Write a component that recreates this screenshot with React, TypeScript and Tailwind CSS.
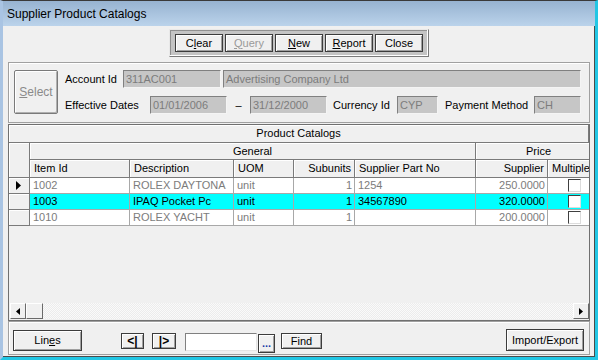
import React from 'react';

const btn =
  'flex items-center justify-center bg-[#f0f0f0] border border-[#3c3c3c] shadow-[inset_1px_1px_0_#fff,inset_-1px_-1px_0_#a0a0a0] text-[11px] leading-none';
const field =
  'h-[18px] bg-[#c6c6c6] border border-t-[#808080] border-l-[#808080] border-r-[#f4f4f4] border-b-[#f4f4f4] text-[#7c7c7c] text-[11px] leading-[16px] pl-[2px] whitespace-nowrap overflow-hidden';
const hdr =
  'shrink-0 bg-[#f0f0f0] border-r border-b border-r-[#7a7a7a] border-b-[#7a7a7a] shadow-[inset_1px_1px_0_#fff] text-[11px] leading-[16px] whitespace-nowrap overflow-hidden';
const cell = 'h-[16px] shrink-0 border-r border-b border-[#a8a8a8] text-[11px] leading-[15px] whitespace-nowrap overflow-hidden';

const cols = [
  { key: 'id', label: 'Item Id', w: 'w-[100px]', right: false },
  { key: 'desc', label: 'Description', w: 'w-[104px]', right: false },
  { key: 'uom', label: 'UOM', w: 'w-[60px]', right: false },
  { key: 'sub', label: 'Subunits', w: 'w-[61px]', right: true },
  { key: 'part', label: 'Supplier Part No', w: 'w-[121px]', right: false },
  { key: 'price', label: 'Supplier', w: 'w-[72px]', right: true },
];

const rows = [
  { id: '1002', desc: 'ROLEX DAYTONA', uom: 'unit', sub: '1', part: '1254', price: '250.0000', sel: false, cur: true },
  { id: '1003', desc: 'IPAQ Pocket Pc', uom: 'unit', sub: '1', part: '34567890', price: '320.0000', sel: true, cur: false },
  { id: '1010', desc: 'ROLEX YACHT', uom: 'unit', sub: '1', part: '', price: '200.0000', sel: false, cur: false },
];

function Check() {
  return (
    <div className="w-[13px] h-[13px] bg-white border border-t-[#404040] border-l-[#404040] border-r-[#dcdcdc] border-b-[#dcdcdc]" />
  );
}

function Arrow({ dir }: { dir: 'l' | 'r' }) {
  return (
    <div className="w-[16px] h-[16px] shrink-0 flex items-center justify-center bg-[#f0f0f0] border border-t-white border-l-white border-r-[#6a6a6a] border-b-[#6a6a6a]">
      <svg width="4" height="7" viewBox="0 0 4 7">
        {dir === 'l' ? <polygon points="4,0 0,3.5 4,7" fill="#000" /> : <polygon points="0,0 4,3.5 0,7" fill="#000" />}
      </svg>
    </div>
  );
}

export default function App() {
  return (
    <div className="w-[598px] h-[360px] flex flex-col overflow-hidden border-t border-t-[#3a3a3a] border-l-[3px] border-l-[#a9c4e3] border-r-[3px] border-r-[#22c6e4] border-b-[3px] border-b-[#22c6e4] font-['Liberation_Sans',Arial,sans-serif] text-black">
      {/* caption */}
      <div className="h-[25px] shrink-0 flex items-center pl-[4px] bg-gradient-to-b from-[#97b3d1] to-[#bbd3eb] text-[12px]">
        Supplier Product Catalogs
      </div>

      <div className="flex-1 flex flex-col bg-[#f0f0f0] pl-[5px] pr-[4px] border-r border-b border-[#4a4a4a] min-h-0">
        {/* toolbar */}
        <div className="mt-[3px] self-center flex gap-[2px] px-[5px] py-[4px] bg-[#c4c4c4] border border-t-[#e8e8e8] border-l-[#e8e8e8] border-r-[#7a7a7a] border-b-[#7a7a7a] shadow-[inset_-1px_-1px_0_#fff,inset_1px_1px_0_#909090]">
          <div className={btn + ' w-[48px] h-[18px]'}>
            C<span className="underline">l</span>ear
          </div>
          <div className={btn + ' w-[48px] h-[18px] text-[#9a9a9a]'}>
            <span className="underline">Q</span>uery
          </div>
          <div className={btn + ' w-[48px] h-[18px]'}>
            <span className="underline">N</span>ew
          </div>
          <div className={btn + ' w-[48px] h-[18px]'}>
            <span className="underline">R</span>eport
          </div>
          <div className={btn + ' w-[48px] h-[18px]'}>Close</div>
        </div>

        {/* account header */}
        <div className="mt-[5px] h-[61px] shrink-0 flex items-start border border-[#a0a0a0] shadow-[inset_1px_1px_0_#fff] pl-[5px] pt-[7px] text-[11px]">
          <div className="w-[44px] h-[44px] flex items-center justify-center bg-[#f0f0f0] border border-[#7a7a7a] shadow-[inset_1px_1px_0_#fff,inset_-1px_-1px_0_#b0b0b0] text-[#8a8a8a] text-[12px] rounded-[2px]">
            <span>
              <span className="underline">S</span>elect
            </span>
          </div>
          <div className="ml-[7px] flex flex-col gap-[8px]">
            <div className="flex items-center">
              <span className="w-[58px]">Account Id</span>
              <div className={field + ' w-[98px]'}>311AC001</div>
              <div className={field + ' w-[358px] ml-[2px]'}>Advertising Company Ltd</div>
            </div>
            <div className="flex items-center">
              <span className="w-[85px]">Effective Dates</span>
              <div className={field + ' w-[77px]'}>01/01/2006</div>
              <span className="w-[23px] text-center">–</span>
              <div className={field + ' w-[77px]'}>31/12/2000</div>
              <span className="w-[64px] ml-[6px]">Currency Id</span>
              <div className={field + ' w-[41px]'}>CYP</div>
              <span className="w-[89px] ml-[7px]">Payment Method</span>
              <div className={field + ' w-[47px]'}>CH</div>
            </div>
          </div>
        </div>

        {/* grid */}
        <div className="mt-[1px] flex-1 flex flex-col border border-[#707070] overflow-hidden min-h-0">
          <div className={hdr + ' h-[18px] leading-[17px] text-center'}>Product Catalogs</div>
          <div className="flex shrink-0">
            <div className={hdr + ' w-[21px] h-[35px]'} />
            <div className="flex flex-col">
              <div className="flex">
                <div className={hdr + ' h-[17px] w-[446px] text-center'}>General</div>
                <div className={hdr + ' h-[17px] w-[126px] text-center'}>Price</div>
              </div>
              <div className="flex">
                {cols.map((c) => (
                  <div key={c.key} className={hdr + ' h-[18px] leading-[17px] ' + c.w + (c.right ? ' text-right pr-[3px]' : ' pl-[4px]')}>
                    {c.label}
                  </div>
                ))}
                <div className={hdr + ' h-[18px] leading-[17px] w-[54px] pl-[4px]'}>Multiple</div>
              </div>
            </div>
          </div>
          {rows.map((r) => (
            <div key={r.id} className="flex shrink-0">
              <div className="w-[21px] h-[16px] shrink-0 flex items-center justify-end pr-[8px] bg-[#f0f0f0] border-r border-b border-[#7a7a7a] shadow-[inset_1px_1px_0_#fff]">
                {r.cur && (
                  <svg width="5" height="9" viewBox="0 0 5 9">
                    <polygon points="0,0 5,4.5 0,9" fill="#000" />
                  </svg>
                )}
              </div>
              {cols.map((c) => (
                <div
                  key={c.key}
                  className={
                    cell +
                    ' ' +
                    c.w +
                    (r.sel ? ' bg-[#00ffff] text-black' : ' bg-white text-[#7c7c7c]') +
                    (c.right ? ' text-right pr-[2px]' : ' pl-[3px]')
                  }
                >
                  {(r as any)[c.key]}
                </div>
              ))}
              <div className={cell + ' w-[54px] flex items-center justify-center' + (r.sel ? ' bg-[#00ffff]' : ' bg-white')}>
                <Check />
              </div>
            </div>
          ))}
          <div className="flex-1" />
          <div className="h-[16px] shrink-0 flex ml-[1px] mb-[1px]">
            <Arrow dir="l" />
            <div className="w-[17px] h-[16px] shrink-0 bg-[#f0f0f0] border border-t-white border-l-white border-r-[#6a6a6a] border-b-[#6a6a6a]" />
            <div className="flex-1 bg-[repeating-conic-gradient(#ececec_0_25%,#fafafa_0_50%)] bg-[length:2px_2px]" />
            <Arrow dir="r" />
          </div>
        </div>

        {/* footer */}
        <div className="h-[34px] shrink-0 mb-[1px] flex items-start border border-[#a0a0a0] shadow-[inset_1px_1px_0_#fff] pl-[4px] pr-[5px] text-[11px]">
          <div className={btn + ' mt-[8px] w-[69px] h-[21px] border-[#2a2a2a] shadow-[inset_1px_1px_0_#fff,inset_-1px_-1px_0_#a0a0a0,inset_2px_2px_0_#f0f0f0,inset_-2px_-2px_0_#c8c8c8]'}>
            Lin<span className="underline">e</span>s
          </div>
          <div className={btn + ' mt-[11px] ml-[39px] w-[23px] h-[16px] font-bold text-[12px]'}>&lt;|</div>
          <div className={btn + ' mt-[11px] ml-[8px] w-[24px] h-[16px] font-bold text-[12px]'}>|&gt;</div>
          <div className="mt-[11px] ml-[9px] w-[72px] h-[18px] bg-white border border-t-[#808080] border-l-[#808080] border-r-[#e4e4e4] border-b-[#e4e4e4]" />
          <div className={btn + ' mt-[12px] ml-[1px] w-[17px] h-[19px] items-end pb-[3px] text-[10px] text-[#1a3aa8] font-bold'}>...</div>
          <div className={btn + ' mt-[11px] ml-[6px] w-[41px] h-[16px]'}>Find</div>
          <div className="flex-1" />
          <div className={btn + ' mt-[7px] w-[78px] h-[22px]'}>Import/Export</div>
        </div>
      </div>
    </div>
  );
}
